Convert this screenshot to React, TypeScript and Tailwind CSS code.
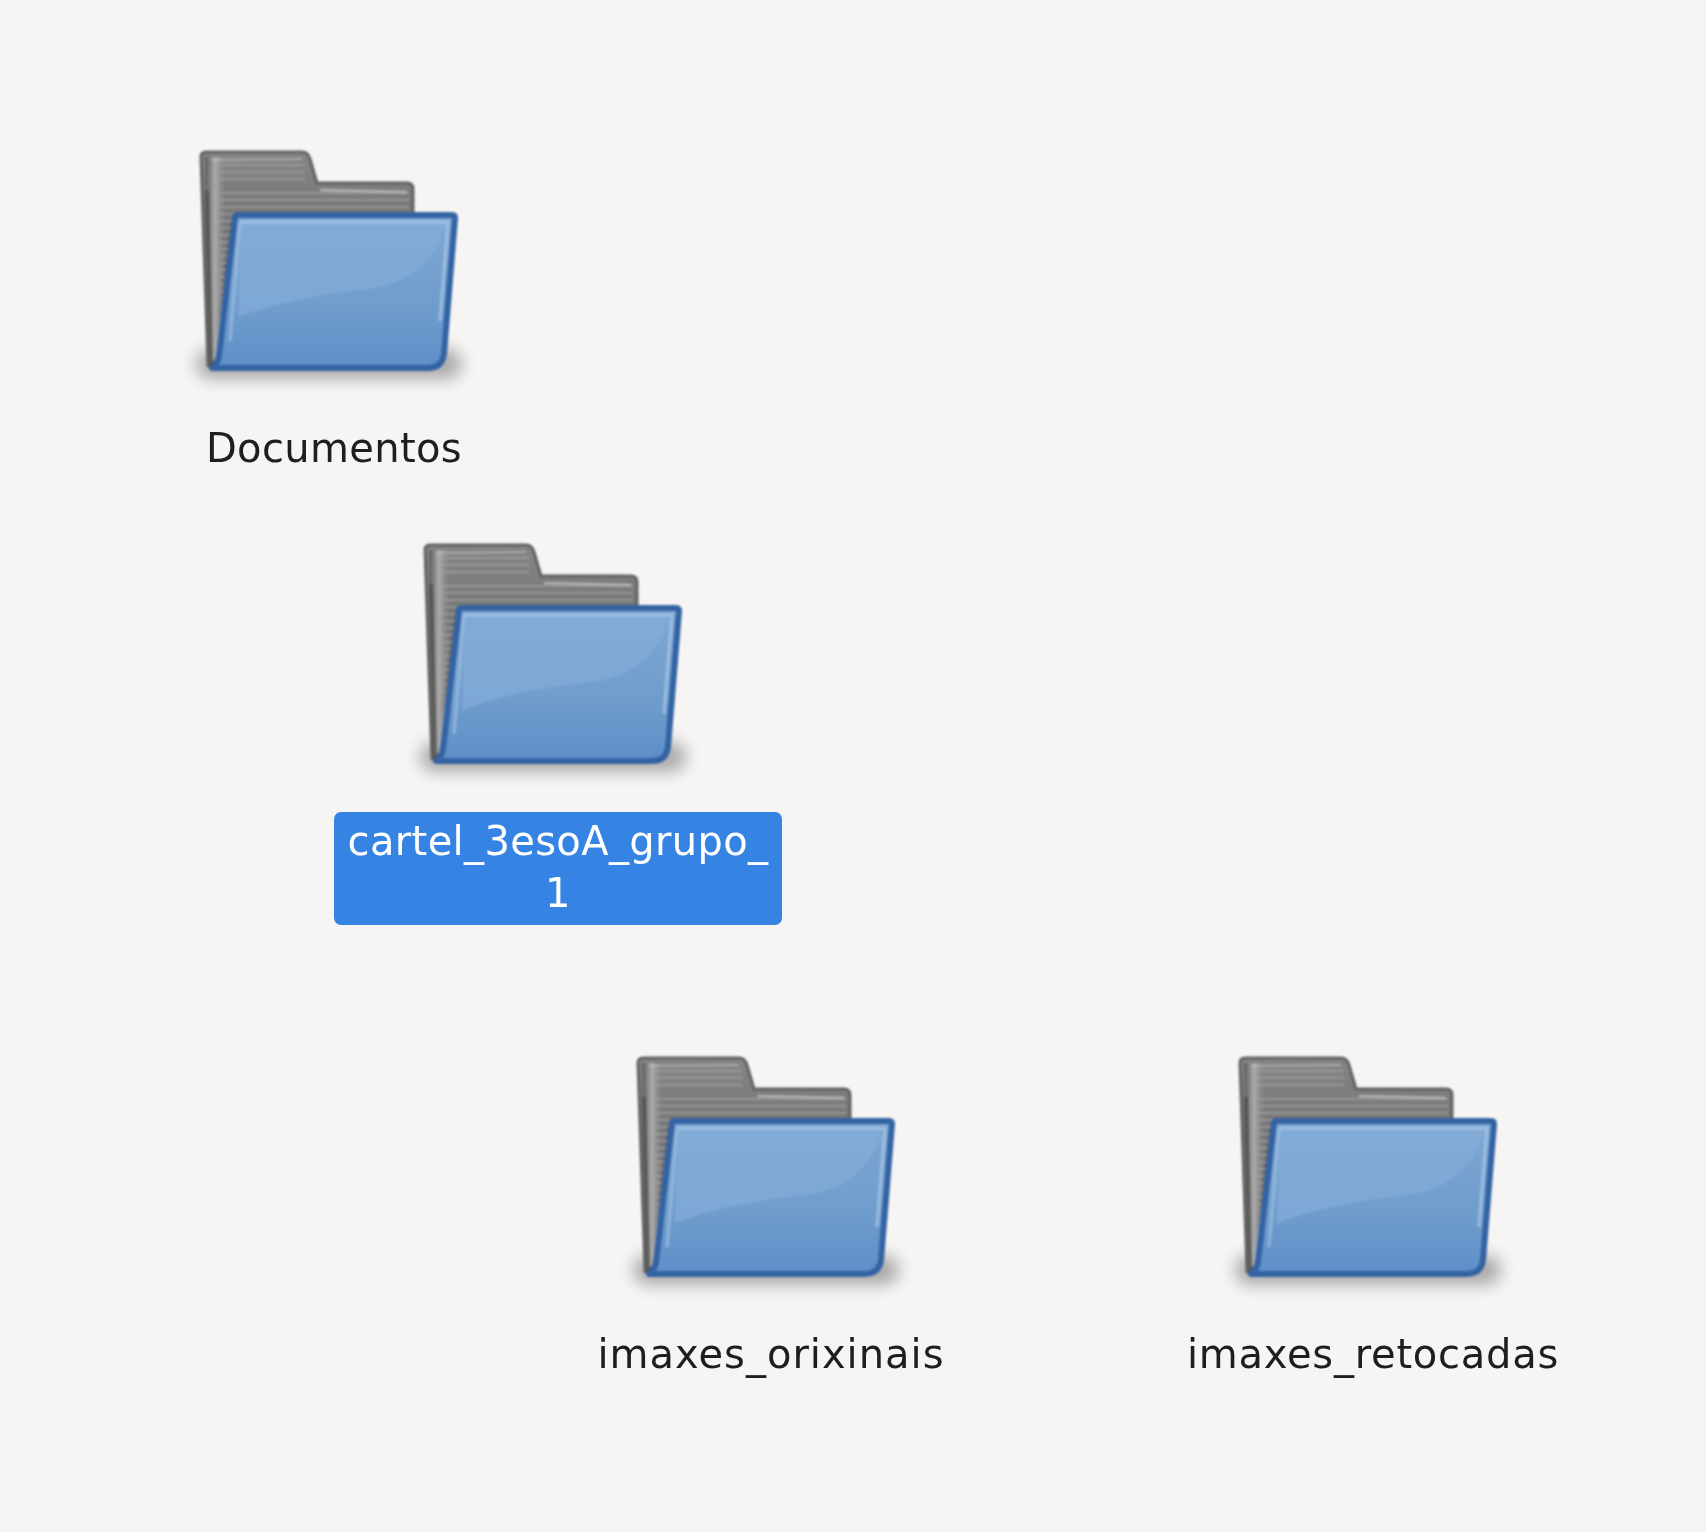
const folders = [
  { name: "Documentos", left: "left-[110px]", top: "top-[150px]", selected: false, tracking: "tracking-[0.35px]" },
  { name: "cartel_3esoA_grupo_1", left: "left-[334px]", top: "top-[543px]", selected: true, tracking: "tracking-[0.35px]" },
  { name: "imaxes_orixinais", left: "left-[547px]", top: "top-[1056px]", selected: false, tracking: "tracking-[1px]" },
  { name: "imaxes_retocadas", left: "left-[1149px]", top: "top-[1056px]", selected: false, tracking: "tracking-[0.75px]" },
];

const stripes = [14, 21, 28, 42, 49, 56, 63, 70, 77, 84, 91, 98, 105, 112, 119, 126, 133, 140, 147, 154, 161, 168, 175, 182, 189];

function FolderIcon({ id }: { id: number }) {
  return (
    <svg width="288" height="246" viewBox="-12 -1 288 246" className="shrink-0 overflow-visible">
      <defs>
        <filter id={`shadow-${id}`} x="-20%" y="-150%" width="140%" height="400%">
          <feGaussianBlur stdDeviation="8" />
        </filter>
        <linearGradient id={`back-${id}`} x1="0" y1="0" x2="0" y2="1">
          <stop offset="0" stopColor="#858585" />
          <stop offset="0.35" stopColor="#747474" />
          <stop offset="1" stopColor="#858585" />
        </linearGradient>
        <linearGradient id={`side-${id}`} x1="0" y1="0" x2="1" y2="0">
          <stop offset="0" stopColor="#5a5a5a" />
          <stop offset="0.05" stopColor="#adadad" />
          <stop offset="0.1" stopColor="#8f8f8f" stopOpacity="0" />
        </linearGradient>
        <linearGradient id={`front-${id}`} x1="0" y1="0" x2="0" y2="1">
          <stop offset="0" stopColor="#7ea6d3" />
          <stop offset="0.55" stopColor="#719ecd" />
          <stop offset="1" stopColor="#5d8fc8" />
        </linearGradient>
      </defs>
      <rect x="-6" y="198" width="266" height="30" rx="15" fill="#000000" opacity="0.3" filter={`url(#shadow-${id})`} />
      <path
        d="M-1 6 Q-1 1 4 1 L100 1 Q106 1 108 8 L115 32 L205 32 Q211 32 211 38 L211 70 L30 70 L10 215 L6 215 Z"
        fill={`url(#back-${id})`}
        stroke="#636363"
        strokeWidth="3"
        strokeLinejoin="round"
      />
      <path d="M3 6 L102 6 L110 31 L118 38 L207 40 L207 64 L30 64 L18 205 L8 212 Z" fill={`url(#side-${id})`} />
      {stripes.map((y) => (
        <path
          key={y}
          d={`M${14 + y * 0.02} ${y} L${y < 60 ? (y < 30 ? 103 : 207) : 32 - (y - 62) * 0.145} ${y}`}
          stroke="#a0a0a0"
          strokeWidth="2.4"
          opacity="0.65"
        />
      ))}
      <path d="M10 9 L100 8" stroke="#c4c4c4" strokeWidth="2" opacity="0.6" />
      <path d="M118 39 L205 41" stroke="#c4c4c4" strokeWidth="2.4" opacity="0.75" />
      <path d="M5 40 L9 214" stroke="#444444" strokeWidth="4" opacity="0.6" />
      <path
        d="M33 66 Q33 64 36 64 L250 64 Q253 64 253 67 L242 203 Q240 217 226 217 L10 217 Q15 214 17 205 Z"
        fill={`url(#front-${id})`}
        stroke="#3363a3"
        strokeWidth="6"
        strokeLinejoin="round"
      />
      <path d="M39 71 L244 71 Q240 92 222 112 Q202 134 160 139 Q90 146 36 166 Z" fill="#84acd8" opacity="0.7" />
      <path d="M38 71 L246 71 L238 170" fill="none" stroke="#a9c6e5" strokeWidth="3.5" opacity="0.7" />
      <path d="M38 71 L28 190" fill="none" stroke="#9fbfe2" strokeWidth="3.5" opacity="0.65" />
    </svg>
  );
}

export default function App() {
  return (
    <div className="relative h-[1532px] w-[1706px] overflow-hidden bg-[#f6f5f4] font-['DejaVu_Sans',sans-serif] text-[40px] leading-[52px]">
      {folders.map((f, i) => (
        <div key={f.name} className={`absolute ${f.left} ${f.top} flex w-[448px] flex-col items-center`}>
          <div className="-mb-[5px] blur-[1.2px]">
            <FolderIcon id={i} />
          </div>
          <div
            className={
              f.selected
                ? `mt-[28px] w-full break-all rounded-[7px] bg-[#3584e4] px-3 pt-[3px] pb-[6px] text-center text-white ${f.tracking}`
                : `mt-[28px] w-full px-3 pt-[3px] text-center text-[#1e1e1e] ${f.tracking}`
            }
          >
            <span className="blur-[0.7px]">{f.name}</span>
          </div>
        </div>
      ))}
    </div>
  );
}
